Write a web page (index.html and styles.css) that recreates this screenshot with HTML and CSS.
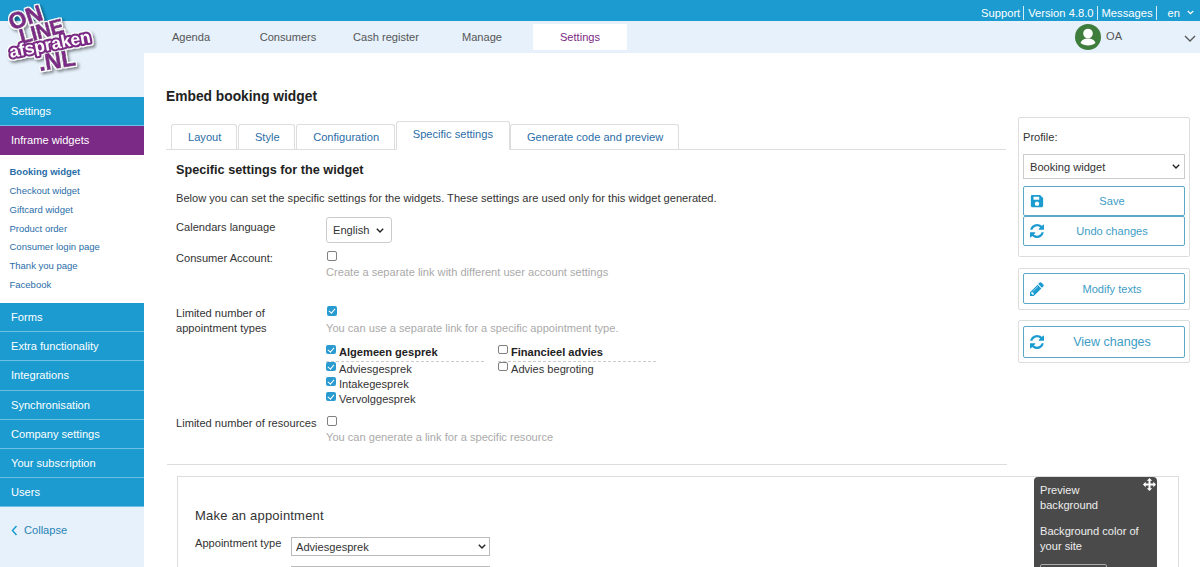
FILE: index.html
```html
<!DOCTYPE html>
<html lang="en">
<head>
<meta charset="utf-8">
<title>Embed booking widget</title>
<link rel="stylesheet" href="styles.css">
</head>
<body>
<header class="topbar">
  <a>Support</a><a>Version 4.8.0</a><a>Messages</a>
  <span class="lang">en <svg width="7" height="5" viewBox="0 0 9 6"><path d="M1 1l3.500 3.500L8 1" fill="none" stroke="#fff" stroke-width="1.600"/></svg></span>
</header>
<div class="layout">
  <aside class="sidebar">
    <svg class="logo" width="110" height="85" viewBox="0 0 110 85">
      <defs>
        <filter id="outline" x="-15%" y="-15%" width="130%" height="130%">
          <feMorphology in="SourceAlpha" operator="dilate" radius="1.300" result="fat"/>
          <feFlood flood-color="#fff"/>
          <feComposite in2="fat" operator="in" result="white"/>
          <feGaussianBlur in="fat" stdDeviation="1.500" result="blur"/>
          <feOffset in="blur" dx="1.500" dy="2" result="shadow"/>
          <feFlood flood-color="#000" flood-opacity=".45"/>
          <feComposite in2="shadow" operator="in" result="sh"/>
          <feMerge><feMergeNode in="sh"/><feMergeNode in="white"/><feMergeNode in="SourceGraphic"/></feMerge>
        </filter>
      </defs>
      <g filter="url(#outline)" font-family="Liberation Sans, sans-serif" font-weight="700" text-anchor="middle">
        <g fill="#7b2a85" stroke="#7b2a85" stroke-width=".8">
          <text transform="translate(28 25) rotate(-18)" font-size="23">ON</text>
          <text transform="translate(43 38) rotate(-15)" font-size="20.500" letter-spacing="-.5">LINE</text>
          <text transform="translate(58 68) rotate(-9)" font-size="23">.NL</text>
        </g>
        <text transform="translate(51 50) rotate(-11)" font-size="17.500" fill="#fff" stroke="#7b2a85" stroke-width="4.500" paint-order="stroke" stroke-linejoin="round">afspraken</text>
      </g>
    </svg>
    <nav class="menu">
      <a class="menu-item">Settings</a>
      <a class="menu-item active">Inframe widgets</a>
      <ul class="submenu">
        <li class="current">Booking widget</li>
        <li>Checkout widget</li>
        <li>Giftcard widget</li>
        <li>Product order</li>
        <li>Consumer login page</li>
        <li>Thank you page</li>
        <li>Facebook</li>
      </ul>
      <a class="menu-item">Forms</a>
      <a class="menu-item">Extra functionality</a>
      <a class="menu-item">Integrations</a>
      <a class="menu-item">Synchronisation</a>
      <a class="menu-item">Company settings</a>
      <a class="menu-item">Your subscription</a>
      <a class="menu-item">Users</a>
    </nav>
    <div class="collapse"><svg width="7" height="11" viewBox="0 0 7 11"><path d="M5.500 1L1.500 5.500l4 4.500" fill="none" stroke="#1b9bd0" stroke-width="1.500"/></svg>Collapse</div>
  </aside>
  <div class="page">
    <nav class="mainnav">
      <a class="n1">Agenda</a><a class="n2">Consumers</a><a class="n3">Cash register</a><a class="n4">Manage</a><a class="n5">Settings</a>
      <div class="user">
        <svg width="26" height="26" viewBox="0 0 26 26"><circle cx="13" cy="13" r="13" fill="#3f7d3c"/><circle cx="13" cy="9.500" r="4.800" fill="#fff"/><path d="M5.500 19c1.500-3.500 4-4.500 7.500-4.500s6 1 7.500 4.500c-1.800 1.600-4.500 2.500-7.500 2.500s-5.700-.9-7.500-2.500z" fill="#fff"/></svg>
        <span>OA</span>
        <svg class="chev" width="12" height="7" viewBox="0 0 12 7"><path d="M1 1l5 5 5-5" fill="none" stroke="#555" stroke-width="1.300"/></svg>
      </div>
    </nav>
    <div class="body">
      <main class="content">
        <h1>Embed booking widget</h1>
        <div class="tabs">
          <a>Layout</a><a>Style</a><a>Configuration</a><a class="on">Specific settings</a><a>Generate code and preview</a>
        </div>
        <section class="panel">
          <h2>Specific settings for the widget</h2>
          <p class="intro">Below you can set the specific settings for the widgets. These settings are used only for this widget generated.</p>
          <div class="row r-lang">
            <label>Calendars language</label>
            <div><select class="sel sel-lang"><option>English</option></select></div>
          </div>
          <div class="row r-acc">
            <label>Consumer Account:</label>
            <div>
              <span class="cb"></span>
              <p class="hint">Create a separate link with different user account settings</p>
            </div>
          </div>
          <div class="row r-types">
            <label>Limited number of<br>appointment types</label>
            <div>
              <span class="cb on"></span>
              <p class="hint">You can use a separate link for a specific appointment type.</p>
              <div class="types">
                <div class="tcol">
                  <div class="thead"><span class="cb on"></span>Algemeen gesprek</div>
                  <div class="titem"><span class="cb on"></span>Adviesgesprek</div>
                  <div class="titem"><span class="cb on"></span>Intakegesprek</div>
                  <div class="titem"><span class="cb on"></span>Vervolggesprek</div>
                </div>
                <div class="tcol">
                  <div class="thead"><span class="cb"></span>Financieel advies</div>
                  <div class="titem"><span class="cb"></span>Advies begroting</div>
                </div>
              </div>
            </div>
          </div>
          <div class="row r-res">
            <label>Limited number of resources</label>
            <div>
              <span class="cb"></span>
              <p class="hint">You can generate a link for a specific resource</p>
            </div>
          </div>
        </section>
        <hr class="rule">
        <section class="preview">
          <h3>Make an appointment</h3>
          <div class="prow"><label>Appointment type</label><select class="sel sel-type"><option>Adviesgesprek</option></select></div>
          <div class="ghost"></div>
          <div class="float">
            <svg class="move" width="13" height="13" viewBox="0 0 24 24"><path d="M12 0l5 5h-3.200V10.200H19V7l5 5-5 5v-3.200H13.800V19H17l-5 5-5-5h3.200V13.800H5V17l-5-5 5-5v3.200h5.200V5H7z" fill="#fff"/></svg>
            <p>Preview<br>background</p>
            <p>Background color of your site</p>
            <div class="swatch"></div>
          </div>
        </section>
      </main>
      <aside class="side">
        <div class="card c1">
          <div class="plabel">Profile:</div>
          <select class="sel sel-prof"><option>Booking widget</option></select>
          <a class="btn">
            <svg width="14" height="14" viewBox="0 0 16 16"><path d="M2.500 1H11.500L15 4.500V13.500A1.500 1.500 0 0 1 13.500 15H2.500A1.500 1.500 0 0 1 1 13.500V2.500A1.500 1.500 0 0 1 2.500 1zM4 3V6.500H10.500V3zM8 8.500a2.500 2.500 0 1 0 0 5 2.500 2.500 0 0 0 0-5z" fill="#1b9bd0" fill-rule="evenodd"/></svg>
            <span>Save</span>
          </a>
          <a class="btn">
            <svg width="14" height="14" viewBox="0 0 1536 1536"><path d="M1511 928q0 5-1 7-64 268-268 434.500t-478 166.500q-146 0-282.500-55t-243.500-157l-129 129q-19 19-45 19t-45-19-19-45v-448q0-26 19-45t45-19h448q26 0 45 19t19 45-19 45l-137 137q71 66 161 102t187 36q134 0 250-65t186-179q11-17 53-117 8-23 30-23h192q13 0 22.500 9.500t9.500 22.500zm25-800v448q0 26-19 45t-45 19h-448q-26 0-45-19t-19-45 19-45l138-138q-148-137-349-137-134 0-250 65t-186 179q-11 17-53 117-8 23-30 23h-199q-13 0-22.500-9.500t-9.500-22.500v-7q65-268 270-434.500t480-166.500q146 0 284 55.500t245 156.500l130-129q19-19 45-19t45 19 19 45z" fill="#1b9bd0"/></svg>
            <span>Undo changes</span>
          </a>
        </div>
        <div class="card c2">
          <a class="btn">
            <svg width="14" height="14" viewBox="0 0 1536 1536"><path d="M363 1408l91-91-235-235-91 91v107h128v128h107zm523-928q0-22-22-22-10 0-17 7l-542 542q-7 7-7 17 0 22 22 22 10 0 17-7l542-542q7-7 7-17zm-54-192l416 416-832 832h-416v-416zm683 96q0 53-37 90l-166 166-416-416 166-165q36-38 90-38 53 0 91 38l235 234q37 39 37 91z" fill="#1b9bd0"/></svg>
            <span>Modify texts</span>
          </a>
        </div>
        <div class="card c3">
          <a class="btn big">
            <svg width="14" height="14" viewBox="0 0 1536 1536"><path d="M1511 928q0 5-1 7-64 268-268 434.500t-478 166.500q-146 0-282.500-55t-243.500-157l-129 129q-19 19-45 19t-45-19-19-45v-448q0-26 19-45t45-19h448q26 0 45 19t19 45-19 45l-137 137q71 66 161 102t187 36q134 0 250-65t186-179q11-17 53-117 8-23 30-23h192q13 0 22.500 9.500t9.500 22.500zm25-800v448q0 26-19 45t-45 19h-448q-26 0-45-19t-19-45 19-45l138-138q-148-137-349-137-134 0-250 65t-186 179q-11 17-53 117-8 23-30 23h-199q-13 0-22.500-9.500t-9.500-22.500v-7q65-268 270-434.500t480-166.500q146 0 284 55.500t245 156.500l130-129q19-19 45-19t45 19 19 45z" fill="#1b9bd0"/></svg>
            <span>View changes</span>
          </a>
        </div>
      </aside>
    </div>
  </div>
</div>
</body>
</html>
```
FILE: styles.css
```css
* { box-sizing: border-box; }
html, body { margin: 0; height: 567px; overflow: hidden; }
body { font-family: "Liberation Sans", Arial, sans-serif; font-size: 11.100px; color: #333; background: #fff; }
p { margin: 0; }

.topbar { height: 21px; background: #1b9bd0; color: #fff; display: flex; justify-content: flex-end; align-items: center; padding: 4px 6px 0 0; font-size: 11.200px; }
.topbar a { padding: 0 3px 0 4px; border-right: 1px solid #d5edf8; line-height: 14px; }
.lang { margin-left: 11px; display: flex; align-items: center; gap: 7px; }

.layout { display: flex; height: 546px; }
.sidebar { width: 144px; flex: none; background: #e6f1fb; padding-top: 76px; position: relative; display: flex; flex-direction: column; }
.logo { position: absolute; left: 0; top: -21px; z-index: 2; }
.menu-item { display: block; height: 29.150px; line-height: 29.500px; padding-left: 11px; background: #1b9bd0; color: #fff; border-bottom: 1px solid #6dc0e3; }
.menu-item.active { background: #7b2a85; border-bottom-color: #7b2a85; }
.submenu { list-style: none; margin: 0; padding: 8px 0 0 9.500px; background: #fff; height: 147.800px; }
.submenu li { height: 18.800px; line-height: 18.800px; font-size: 9.500px; color: #2a6da8; }
.submenu .current { font-weight: 700; }
.collapse { padding: 17px 0 0 11px; color: #2a83b5; display: flex; align-items: center; gap: 6px; }

.page { flex: 1; min-width: 0; display: flex; flex-direction: column; }
.mainnav { height: 32px; background: #e6f1fb; display: flex; color: #555; flex: none; align-items: flex-start; }
.mainnav > a { height: 26px; margin-top: 3px; line-height: 27px; text-align: center; }
.n1 { width: 94px; }
.n2 { width: 100px; }
.n3 { width: 96px; }
.n4 { width: 96px; }
.mainnav .n5 { width: 94px; background: #fff; color: #7b2a85; margin-left: 3px; }
.user { margin-left: auto; display: flex; align-items: center; height: 32px; padding-right: 4px; gap: 5px; color: #555; }
.user span { width: 73px; margin-top: -3px; }
.user .chev { margin-top: 3px; }

.body { flex: 1; display: flex; min-height: 0; overflow: hidden; }
.content { width: 846px; padding: 36px 0 0 22px; flex: none; }
h1 { margin: 0; font-size: 13.800px; font-weight: 700; color: #222; line-height: 16px; }
.tabs { margin-top: 17px; display: flex; align-items: flex-end; height: 28px; border-bottom: 1px solid #ddd; width: 840px; padding-left: 5px; }
.tabs a { height: 25px; line-height: 25px; padding: 0 14.600px 0 16px; color: #2a6da8; border: 1px solid #ddd; border-bottom: 0; border-radius: 3px 3px 0 0; margin-right: 1px; background: #fff; }
.tabs a.on { height: 29px; line-height: 25px; padding: 0 16px; margin: 0 0 -1px; border-bottom: 1px solid #fff; }
.panel { padding-left: 10px; }
h2 { margin: 13px 0 0; font-size: 12.700px; font-weight: 700; color: #222; line-height: 15px; }
.intro { margin-top: 13px; line-height: 15px; }
.row { display: grid; grid-template-columns: 150px 1fr; }
.row label { line-height: 15px; }
.r-lang { margin-top: 11px; height: 33px; }
.r-lang label { padding-top: 3px; }
.sel { appearance: none; font: 11.100px "Liberation Sans", sans-serif; color: #333; background: #fff no-repeat; background-size: 8px 5px; background-image: url("data:image/svg+xml,%3Csvg xmlns='http://www.w3.org/2000/svg' viewBox='0 0 8 5'%3E%3Cpath d='M.8.8 4 4 7.200.8' fill='none' stroke='%23222' stroke-width='1.400'/%3E%3C/svg%3E"); }
.sel-lang { height: 26px; width: 66px; border: 1px solid #ccc; border-radius: 3px; padding-left: 6px; background-position: right 7px center; }
.r-acc { height: 56px; }
.r-acc label { padding-top: 1px; }
.cb { display: inline-block; width: 9.600px; height: 9.600px; border: 1px solid #808080; border-radius: 2px; background: #fff; }
.cb.on { border: 0; background: #2a9bd0; position: relative; }
.cb.on::after { content: ""; position: absolute; left: 3.300px; top: 1.200px; width: 2.500px; height: 5px; border: solid #fff; border-width: 0 1.500px 1.500px 0; transform: rotate(40deg); }
.r-acc .cb, .r-types > div > .cb, .r-res .cb { margin-left: 1px; display: block; }
.r-acc .cb, .r-res .cb { margin-top: 1px; }
.hint { color: #aaa; line-height: 15px; margin-top: 5px; }
.r-acc .hint, .r-res .hint { margin-top: 4px; }
.r-types { height: 109px; }
.types { display: flex; gap: 14px; margin-top: 9px; }
.tcol { width: 158px; }
.thead { height: 17px; line-height: 15px; font-weight: 700; color: #222; border-bottom: 1px dashed #ccc; white-space: nowrap; display: flex; gap: 3.400px; }
.titem { height: 15px; line-height: 15px; display: flex; gap: 3.400px; }
.thead .cb, .titem .cb { flex: none; }
.r-res { height: 49px; }
.r-res label { padding-top: 1px; white-space: nowrap; }
.rule { margin: 0 0 0 1px; width: 840px; border: 0; border-top: 1px solid #ddd; }
.preview { margin: 11px 0 0 11px; width: 1002px; height: 120px; border: 1px solid #ddd; padding: 31px 0 0 17px; position: relative; background: #fff; }
h3 { margin: 0; font-size: 13px; font-weight: 400; color: #333; line-height: 15px; letter-spacing: .2px; }
.prow { display: flex; align-items: center; margin-top: 14px; }
.prow label { width: 96px; margin-top: -8px; }
.sel-type { width: 199px; height: 19px; border: 1px solid #bbb; padding-left: 4px; background-position: right 3px center; }
.ghost { margin: 10px 0 0 96px; width: 199px; height: 10px; border: 1px solid #bbb; }
.float { position: absolute; left: 856px; top: 0; width: 123px; height: 100px; background: #4a4a4a; border-radius: 4px 4px 0 0; color: #eee; line-height: 15px; padding: 6px; }
.float p + p { margin-top: 11px; }
.move { position: absolute; right: 1px; top: 1px; }
.swatch { margin-top: 10px; height: 20px; width: 67px; border: 1px solid #aaa; border-radius: 2px; }

.side { width: 210px; padding: 64px 0 0 28px; position: relative; z-index: 1; flex: none; }
.card { width: 172px; border: 1px solid #ddd; border-radius: 2px; padding: 4px; background: #fff; }
.c1 { height: 140px; margin-bottom: 11px; }
.c2 { height: 42px; margin-bottom: 10px; }
.c3 { height: 43px; padding: 5px 4px; }
.plabel { line-height: 15px; margin-top: 8px; color: #333; }
.sel-prof { display: block; margin: 9px 0 7px; width: 162px; height: 25px; border: 1px solid #ccc; padding-left: 6px; background-position: right 4px center; }
.btn { display: flex; align-items: center; height: 30px; width: 162px; border: 1px solid #5ba9c7; border-radius: 2px; color: #3d9dc5; padding-left: 6px; background: #fff; }
.c1 .btn span { margin-top: -1px; }
.c2 .btn { height: 31px; }
.btn span { flex: 1; text-align: center; padding-right: 4px; }
.btn svg { flex: none; }
.btn.big { height: 32px; font-size: 12.500px; }
```
